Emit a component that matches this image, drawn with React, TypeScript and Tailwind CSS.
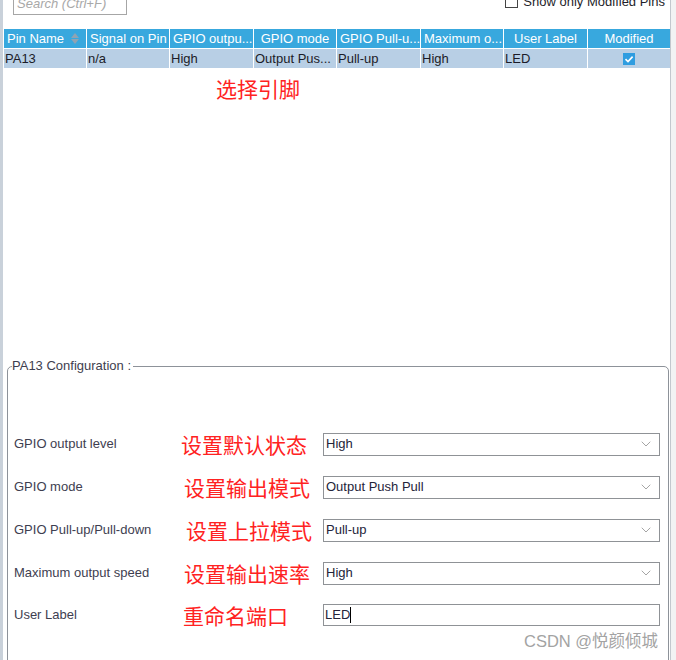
import { ChevronDown } from 'lucide-react';

const headers = [
  { label: 'Pin Name', align: 'left', sort: true },
  { label: 'Signal on Pin', align: 'left' },
  { label: 'GPIO outpu...', align: 'left' },
  { label: 'GPIO mode', align: 'center' },
  { label: 'GPIO Pull-u...', align: 'left' },
  { label: 'Maximum o...', align: 'left' },
  { label: 'User Label', align: 'center' },
  { label: 'Modified', align: 'center' },
];

const row = ['PA13', 'n/a', 'High', 'Output Pus...', 'Pull-up', 'High', 'LED'];

const config = [
  { label: 'GPIO output level', note: '设置默认状态', pl: 'pl-0', value: 'High' },
  { label: 'GPIO mode', note: '设置输出模式', pl: 'pl-[3px]', value: 'Output Push Pull' },
  { label: 'GPIO Pull-up/Pull-down', note: '设置上拉模式', pl: 'pl-[5px]', value: 'Pull-up' },
  { label: 'Maximum output speed', note: '设置输出速率', pl: 'pl-[3px]', value: 'High' },
];

export default function App() {
  return (
    <div className="relative w-[676px] h-[660px] overflow-hidden bg-white font-['Liberation_Sans',Arial,sans-serif] text-[13px]">
      <div className="flex h-full">
        <div className="w-[3px] h-full bg-[#c9d1da] shrink-0" />
        <div className="flex-1 flex flex-col">
          {/* toolbar */}
          <div className="flex items-start h-[29px] shrink-0">
            <div className="ml-[10px] mt-[-7px] w-[114px] h-[22px] border border-[#a6a6a6] flex items-center px-[3px] text-[#a8a8a8] italic">
              Search (Ctrl+F)
            </div>
            <div className="ml-auto mr-[5px] mt-[-8px] flex items-center gap-[5px] text-[#1e1e2a]">
              <span className="w-[13px] h-[13px] border border-[#444] bg-white" />
              <span>Show only Modified Pins</span>
            </div>
          </div>

          {/* table */}
          <div className="ml-px grid grid-cols-[82px_82px_83px_82px_83px_82px_83px_82px] gap-x-px w-[666px]">
            {headers.map((h) => (
              <div
                key={h.label}
                className={`h-[19px] bg-[#38a8de] text-white flex items-center px-[3px] leading-none whitespace-nowrap overflow-hidden ${
                  h.align === 'center' ? 'justify-center' : 'justify-start'
                }`}
              >
                <span>{h.label}</span>
                {h.sort && (
                  <span className="ml-auto mr-[4px] flex flex-col items-center gap-px">
                    <span className="w-0 h-0 border-x-[4px] border-x-transparent border-b-[5px] border-b-[#8fa3b3]" />
                    <span className="w-0 h-0 border-x-[4px] border-x-transparent border-t-[5px] border-t-[#8fa3b3]" />
                  </span>
                )}
              </div>
            ))}
          </div>
          <div className="ml-px mt-px grid grid-cols-[82px_82px_83px_82px_83px_82px_83px_82px] gap-x-px w-[666px]">
            {row.map((c, i) => (
              <div key={i} className="h-[19px] bg-[#b8cfe5] text-[#1c1c28] flex items-center px-[1px] leading-none whitespace-nowrap">
                {c}
              </div>
            ))}
            <div className="h-[19px] bg-[#b8cfe5] flex items-center justify-center">
              <span className="w-[12px] h-[12px] bg-[#2f9de0] flex items-center justify-center">
                <svg width="10" height="10" viewBox="0 0 10 10">
                  <path d="M1.5 5.2 L4 7.6 L8.6 2.6" fill="none" stroke="white" strokeWidth="1.6" />
                </svg>
              </span>
            </div>
          </div>

          <div className="ml-[213px] mt-[6px] text-[21px] leading-[28px] text-[#ff2222] font-['Noto_Sans_CJK_SC',sans-serif]">
            选择引脚
          </div>

          {/* configuration */}
          <fieldset className="mt-[256px] ml-[4px] w-[662px] h-[320px] shrink-0 border border-[#8d9299] rounded-[5px] px-[6px]">
            <legend className="ml-[-2px] pr-[2px] text-[#3e3e4e] leading-[16px]">PA13 Configuration :</legend>
            <div className="flex flex-col gap-[21px] mt-[59px]">
              {config.map((c) => (
                <div key={c.label} className="flex items-center h-[22px]">
                  <span className="w-[167px] whitespace-nowrap text-[#3e3e50]">{c.label}</span>
                  <span className={`${c.pl} w-[142px] whitespace-nowrap text-[21px] leading-none text-[#ff2222] font-['Noto_Sans_CJK_SC',sans-serif]`}>
                    {c.note}
                  </span>
                  <div className="w-[337px] h-[23px] border border-[#8f9296] bg-white flex items-center pl-[2px] text-[#24243a]">
                    <span>{c.value}</span>
                    <ChevronDown size={16} strokeWidth={1} className="ml-auto mr-[5px] text-[#777]" />
                  </div>
                </div>
              ))}
              <div className="flex items-center h-[22px] mt-[-1px]">
                <span className="w-[167px] whitespace-nowrap text-[#3e3e50]">User Label</span>
                <span className="pl-[2px] w-[142px] whitespace-nowrap text-[21px] leading-none text-[#ff2222] font-['Noto_Sans_CJK_SC',sans-serif]">
                  重命名端口
                </span>
                <div className="w-[337px] h-[22px] border border-[#8f9296] bg-white flex items-center pl-[1px] text-[#24243a]">
                  <span>LED</span>
                  <span className="w-px h-[16px] bg-black" />
                </div>
              </div>
            </div>
          </fieldset>
        </div>
        <div className="w-[6px] h-full border-l border-[#c3c8ce] bg-[#f2f3f4] shrink-0" />
      </div>

      <div className="absolute left-[524px] top-[629px] text-[16.5px] text-[#a3a3a3] font-['Liberation_Sans','Noto_Sans_CJK_SC',sans-serif]">
        CSDN @悦颜倾城
      </div>
    </div>
  );
}
